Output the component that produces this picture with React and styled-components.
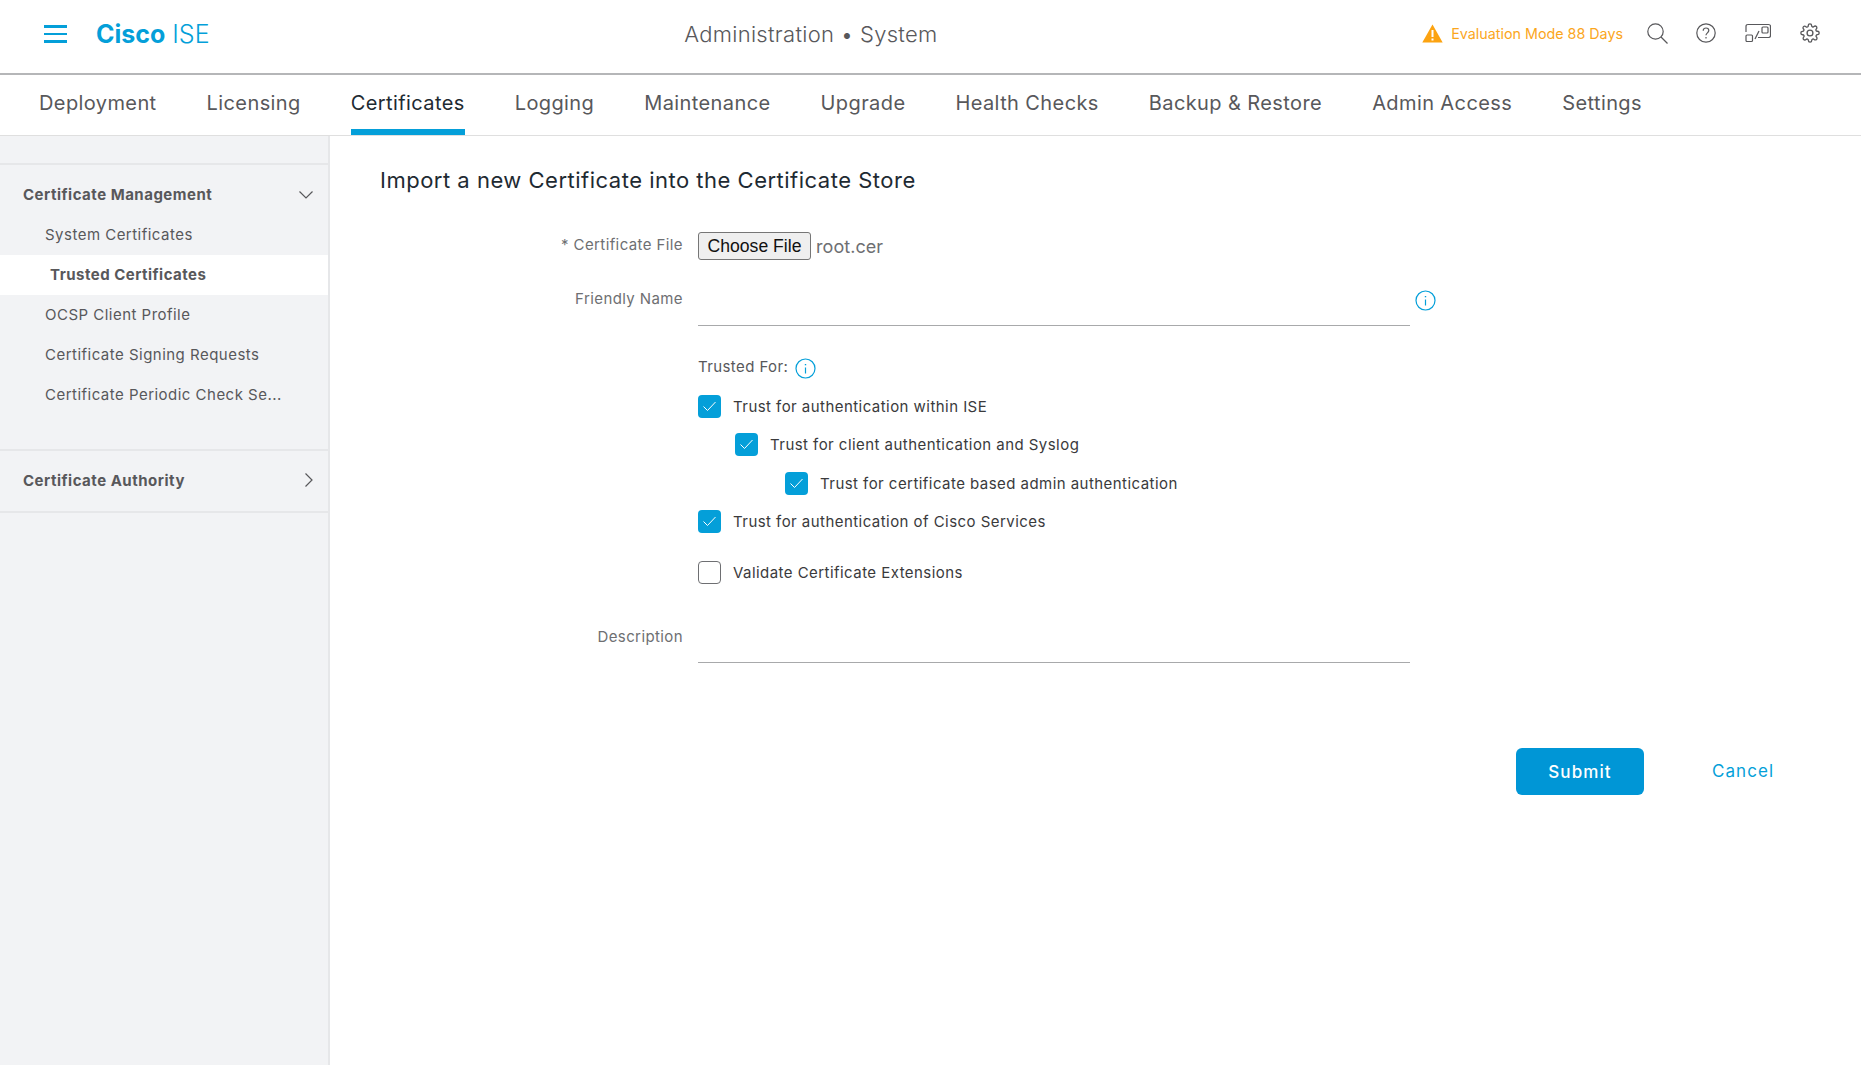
import React from 'react'
import styled, { createGlobalStyle } from 'styled-components'

const blue = '#049fd9'
const grey = '#58585b'

const GlobalStyle = createGlobalStyle`
  html, body { margin: 0; padding: 0; background: #fff; }
  body { font-family: Inter, "Liberation Sans", sans-serif; color: ${grey}; }
  * { box-sizing: border-box; }
`

const Page = styled.div`
  display: flex;
  flex-direction: column;
  height: 100vh;
  overflow: hidden;
`

// Top bar
const Header = styled.header`
  position: relative;
  display: flex;
  align-items: center;
  height: 75px;
  padding: 0 41px 5px 44px;
  border-bottom: 2px solid #b5b6b8;
`
const MenuButton = styled.div`
  display: flex;
  flex-direction: column;
  gap: 5px;
  width: 23px;
  margin-right: 29px;
  span { display: block; height: 2.5px; background: ${blue}; }
`
const Brand = styled.div`
  font-size: 25px;
  color: ${blue};
  b { font-weight: 700; margin-right: 7px; }
  span { font-weight: 300; }
`
const PageTitle = styled.div`
  flex: 1;
  text-align: center;
  font-size: 22px;
  font-weight: 300;
  letter-spacing: 0.3px;
  color: ${grey};
  padding-right: 10px;
`
const HeaderRight = styled.div`
  display: flex;
  align-items: center;
  margin-bottom: 2px;
`
const Warning = styled.div`
  display: flex;
  align-items: center;
  gap: 8px;
  font-size: 14.3px;
  color: #fba61c;
  margin-right: 24px;
`
const ToolIcon = styled.svg`
  display: block;
  margin-left: ${p => p.$gap || 0}px;
  fill: none;
  stroke: ${grey};
  stroke-width: ${p => p.$sw || 1.2};
`

// Tabs
const Tabs = styled.nav`
  display: flex;
  gap: 50px;
  height: 61px;
  padding-left: 39px;
  border-bottom: 1px solid #dfdfdf;
  flex-shrink: 0;
`
const Tab = styled.div`
  height: 60px;
  padding-top: 16px;
  font-size: 20px;
  font-weight: 400;
  letter-spacing: 0.4px;
  color: ${p => (p.$active ? '#1e2a32' : grey)};
  border-bottom: 6px solid ${p => (p.$active ? blue : 'transparent')};
`

// Sidebar
const Body = styled.div`
  display: flex;
  flex: 1;
  min-height: 0;
`
const Sidebar = styled.aside`
  width: 330px;
  flex-shrink: 0;
  padding-top: 27px;
  background: #f2f3f5;
  border-right: 2px solid #e6e7e9;
`
const Section = styled.div`
  border-top: 2px solid #e6e7e9;
  &:last-child { border-bottom: 2px solid #e6e7e9; }
`
const SectionHead = styled.div`
  display: flex;
  align-items: center;
  justify-content: space-between;
  height: ${p => p.$h}px;
  padding: ${p => p.$pt || 0}px 15px ${p => p.$pb || 0}px 23px;
  font-size: 15px;
  font-weight: 700;
  letter-spacing: 0.5px;
  color: ${grey};
`
const SideList = styled.div`
  padding-bottom: 34px;
`
const SideItem = styled.div`
  height: 40px;
  line-height: 39px;
  padding-left: ${p => (p.$active ? 50 : 45)}px;
  font-size: 15px;
  font-weight: ${p => (p.$active ? 700 : 400)};
  letter-spacing: 0.48px;
  color: ${grey};
  background: ${p => (p.$active ? '#fff' : 'transparent')};
`
const Chevron = styled.svg`
  display: block;
  fill: none;
  stroke: ${grey};
  stroke-width: 1.2;
`

// Main form
const Main = styled.main`
  flex: 1;
  padding: 29px 0 0 50px;
`
const Title = styled.h1`
  margin: 0 0 37px;
  font-size: 22px;
  line-height: 30px;
  font-weight: 400;
  letter-spacing: 0.5px;
  color: #1e2a32;
`
const FieldRow = styled.div`
  display: grid;
  grid-template-columns: 303px 712px auto;
  column-gap: 15px;
  align-items: start;
  height: ${p => p.$h}px;
`
const FieldLabel = styled.label`
  text-align: right;
  font-size: 15px;
  line-height: 18px;
  padding-top: ${p => p.$pt || 0}px;
  letter-spacing: 0.4px;
  color: #6e6f72;
`
const FileBox = styled.div`
  display: flex;
  align-items: center;
  gap: 5px;
`
const ChooseFile = styled.button`
  width: 113px;
  height: 28px;
  padding: 0;
  font-family: "Liberation Sans", sans-serif;
  font-size: 17.6px;
  color: #111;
  background: #efefef;
  border: 1px solid #767676;
  border-radius: 3px;
`
const FileName = styled.span`
  font-size: 18px;
  letter-spacing: 0.06px;
  color: #6e6f72;
`
const LineInput = styled.div`
  height: ${p => p.$h}px;
  border-bottom: 1px solid #a8a9ab;
`
const InfoIcon = styled.svg`
  display: block;
  margin: ${p => p.$m || 0};
  fill: none;
  stroke: ${blue};
`
const TrustedHead = styled.div`
  display: flex;
  align-items: center;
  gap: 7px;
  height: 24px;
  margin-top: 6px;
  font-size: 15px;
  letter-spacing: 0.4px;
  color: ${grey};
`
const Checks = styled.div`
  grid-column: 2;
`
const CheckRow = styled.div`
  display: flex;
  align-items: center;
  gap: 12px;
  height: 23px;
  margin-top: ${p => p.$mt}px;
  margin-left: ${p => p.$indent || 0}px;
  font-size: 15px;
  letter-spacing: 0.45px;
  color: #3a3a3c;
`
const CheckBox = styled.span`
  display: flex;
  align-items: center;
  justify-content: center;
  width: 23px;
  height: 23px;
  border-radius: 4px;
  background: ${p => (p.$on ? '#049fd9' : '#fff')};
  border: ${p => (p.$on ? 'none' : '1.5px solid #6e6f72')};
  svg { fill: none; stroke: #fff; stroke-width: 1; }
`
const Actions = styled.div`
  display: flex;
  align-items: center;
  margin: 84px 0 0 1136px;
  gap: 68px;
`
const SubmitButton = styled.button`
  width: 128px;
  height: 47px;
  border: none;
  border-radius: 6px;
  background: #0096d6;
  color: #fff;
  font-family: inherit;
  font-size: 17px;
  font-weight: 500;
  letter-spacing: 1.1px;
`
const CancelLink = styled.a`
  font-size: 17px;
  letter-spacing: 1.05px;
  color: ${blue};
  margin-bottom: 2px;
`

const tabs = ['Deployment', 'Licensing', 'Certificates', 'Logging', 'Maintenance', 'Upgrade', 'Health Checks', 'Backup & Restore', 'Admin Access', 'Settings']
const sideItems = ['System Certificates', 'Trusted Certificates', 'OCSP Client Profile', 'Certificate Signing Requests', 'Certificate Periodic Check Se...']

const Info = ({ m }) => (
  <InfoIcon $m={m} width="21" height="21" viewBox="0 0 21 21">
    <circle cx="10.5" cy="10.5" r="9.5" strokeWidth="1.2" />
    <path d="M10.5 9.5v6" strokeWidth="1.2" />
    <path d="M10.5 6v1.3" strokeWidth="1.4" />
  </InfoIcon>
)

const Check = ({ on, indent, mt, children }) => (
  <CheckRow $indent={indent} $mt={mt}>
    <CheckBox $on={on}>
      {on && (
        <svg width="15" height="11" viewBox="0 0 15 11"><path d="M1.5 5.500l4 4L13.500 1" /></svg>
      )}
    </CheckBox>
    {children}
  </CheckRow>
)

export default function App() {
  return (
    <Page>
      <GlobalStyle />
      <Header>
        <MenuButton><span /><span /><span /></MenuButton>
        <Brand><b>Cisco</b><span>ISE</span></Brand>
        <PageTitle>Administration • System</PageTitle>
        <HeaderRight>
          <Warning>
            <svg width="21" height="19" viewBox="0 0 21 19">
              <path d="M10.5 0.5L20.7 18.5H0.3Z" fill="#fca311" />
              <path d="M10.5 6v7M10.5 14.5v2" stroke="#fff" strokeWidth="2" />
            </svg>
            Evaluation Mode 88 Days
          </Warning>
          <ToolIcon width="21" height="21" viewBox="0 0 21 21">
            <circle cx="8.5" cy="8.5" r="7.7" />
            <path d="M14 14l6.5 6.5" />
          </ToolIcon>
          <ToolIcon $gap={28} width="20" height="20" viewBox="0 0 20 20">
            <circle cx="10" cy="10" r="9.2" />
            <path d="M7.2 7.8C7.2 6 8.5 5 10 5s2.8 1 2.8 2.6c0 2.2-2.8 2.4-2.8 4.6M10 14v1.4" />
          </ToolIcon>
          <ToolIcon $gap={29} width="26" height="20" viewBox="0 0 26 20">
            <path d="M1 9V3.5Q1 1.5 3 1.5h20.5Q25.500 1.500 25.500 3.500v9Q25.500 14.500 23.500 14.500H13" />
            <rect x="1" y="12" width="6.500" height="6.500" rx="1" />
            <rect x="17" y="4" width="6" height="6" rx="1" />
            <path d="M10 16l4-8" />
          </ToolIcon>
          <ToolIcon $gap={29} $sw={1.6} width="20" height="20" viewBox="0 0 24 24">
            <circle cx="12" cy="12" r="3.500" />
            <path d="M19.400 15a1.650 1.650 0 0 0 .33 1.820l.06.06a2 2 0 1 1-2.830 2.830l-.06-.06a1.650 1.650 0 0 0-2.820 1.170V21a2 2 0 0 1-4 0v-.09a1.650 1.650 0 0 0-2.820-1.170l-.06.06a2 2 0 1 1-2.830-2.830l.06-.06a1.650 1.650 0 0 0-1.170-2.820H3a2 2 0 0 1 0-4h.09a1.650 1.650 0 0 0 1.170-2.820l-.06-.06a2 2 0 1 1 2.830-2.830l.06.06a1.650 1.650 0 0 0 2.820-1.170V3a2 2 0 0 1 4 0v.09a1.650 1.650 0 0 0 2.820 1.170l.06-.06a2 2 0 1 1 2.830 2.830l-.06.06a1.650 1.650 0 0 0 1.170 2.820H21a2 2 0 0 1 0 4h-.09a1.650 1.650 0 0 0-1.510 1z" />
          </ToolIcon>
        </HeaderRight>
      </Header>

      <Tabs>
        {tabs.map(t => <Tab key={t} $active={t === 'Certificates'}>{t}</Tab>)}
      </Tabs>

      <Body>
        <Sidebar>
          <Section>
            <SectionHead $h={50} $pt={9}>
              Certificate Management
              <Chevron width="14" height="8" viewBox="0 0 14 8"><path d="M0.500 0.500L7 7l6.500-6.500" /></Chevron>
            </SectionHead>
            <SideList>
              {sideItems.map(s => <SideItem key={s} $active={s === 'Trusted Certificates'}>{s}</SideItem>)}
            </SideList>
          </Section>
          <Section>
            <SectionHead $h={60} $pb={2}>
              Certificate Authority
              <Chevron width="8" height="14" viewBox="0 0 8 14"><path d="M0.500 0.500L7 7l-6.500 6.500" /></Chevron>
            </SectionHead>
          </Section>
        </Sidebar>

        <Main>
          <Title>Import a new Certificate into the Certificate Store</Title>
          <FieldRow $h={52}>
            <FieldLabel $pt={4}>* Certificate File</FieldLabel>
            <FileBox>
              <ChooseFile>Choose File</ChooseFile>
              <FileName>root.cer</FileName>
            </FileBox>
          </FieldRow>
          <FieldRow $h={64}>
            <FieldLabel $pt={6}>Friendly Name</FieldLabel>
            <LineInput $h={42} />
            <Info m="6px 0 0 -10px" />
          </FieldRow>
          <FieldRow $h={256}>
            <Checks>
              <TrustedHead>Trusted For: <Info m="4px 0 0 0" /></TrustedHead>
              <Check on mt={17}>Trust for authentication within ISE</Check>
              <Check on indent={37} mt={15.4}>Trust for client authentication and Syslog</Check>
              <Check on indent={87} mt={15.4}>Trust for certificate based admin authentication</Check>
              <Check on mt={15.4}>Trust for authentication of Cisco Services</Check>
              <Check mt={28}>Validate Certificate Extensions</Check>
            </Checks>
          </FieldRow>
          <FieldRow $h={60}>
            <FieldLabel $pt={24}>Description</FieldLabel>
            <LineInput $h={59} />
          </FieldRow>
          <Actions>
            <SubmitButton>Submit</SubmitButton>
            <CancelLink>Cancel</CancelLink>
          </Actions>
        </Main>
      </Body>
    </Page>
  )
}
